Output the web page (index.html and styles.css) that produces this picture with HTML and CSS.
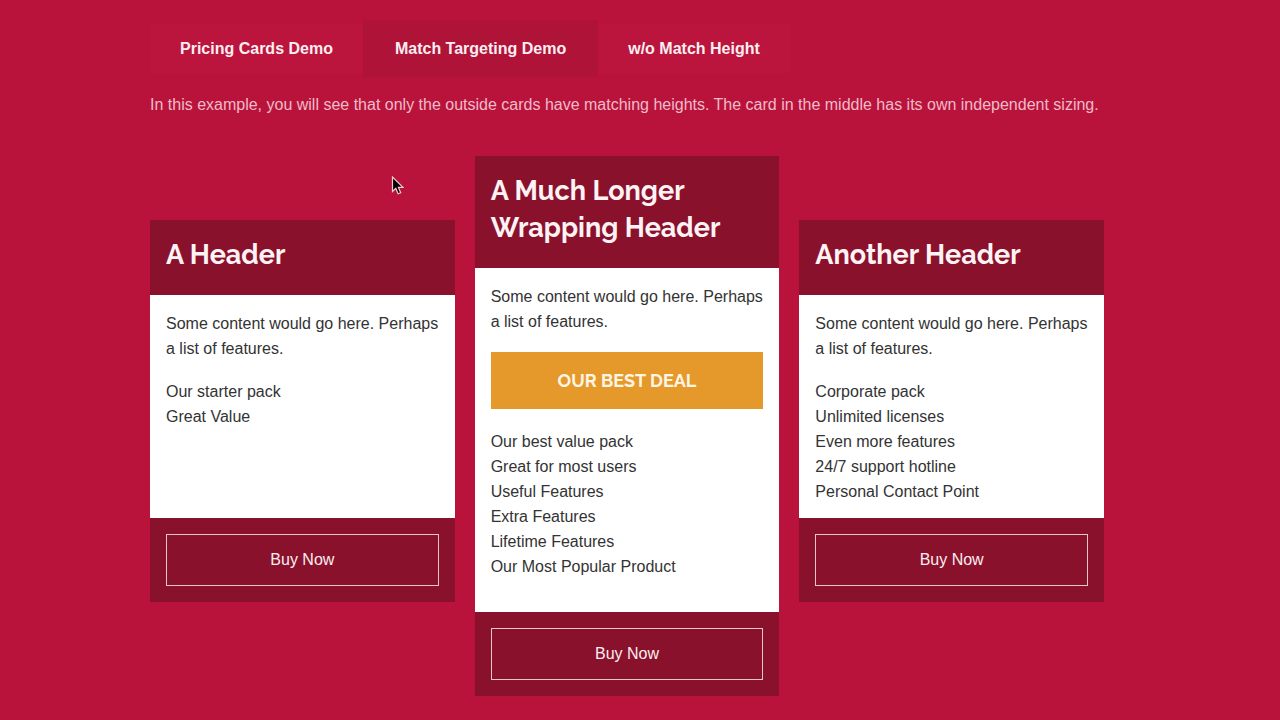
FILE: index.html
```html
<!DOCTYPE html>
<html lang="en">
<head>
<meta charset="UTF-8">
<meta name="viewport" content="width=device-width, initial-scale=1.0">
<title>Match Targeting Demo</title>
<link rel="stylesheet" href="styles.css">
</head>
<body>
<nav class="tabs">
  <a href="#pricing">Pricing Cards Demo</a>
  <a href="#targeting" class="active">Match Targeting Demo</a>
  <a href="#without">w/o Match Height</a>
</nav>
<p class="intro">In this example, you will see that only the outside cards have matching heights. The card in the middle has its own independent sizing.</p>
<main class="cards">
  <section class="card match">
    <h2>A Header</h2>
    <div class="card-body">
      <p>Some content would go here. Perhaps a list of features.</p>
      <ul>
        <li>Our starter pack</li>
        <li>Great Value</li>
      </ul>
    </div>
    <div class="card-footer">
      <button type="button">Buy Now</button>
    </div>
  </section>
  <section class="card">
    <h2>A Much Longer Wrapping Header</h2>
    <div class="card-body">
      <p>Some content would go here. Perhaps a list of features.</p>
      <h3>Our Best Deal</h3>
      <ul>
        <li>Our best value pack</li>
        <li>Great for most users</li>
        <li>Useful Features</li>
        <li>Extra Features</li>
        <li>Lifetime Features</li>
        <li>Our Most Popular Product</li>
      </ul>
    </div>
    <div class="card-footer">
      <button type="button">Buy Now</button>
    </div>
  </section>
  <section class="card match">
    <h2>Another Header</h2>
    <div class="card-body">
      <p>Some content would go here. Perhaps a list of features.</p>
      <ul>
        <li>Corporate pack</li>
        <li>Unlimited licenses</li>
        <li>Even more features</li>
        <li>24/7 support hotline</li>
        <li>Personal Contact Point</li>
      </ul>
    </div>
    <div class="card-footer">
      <button type="button">Buy Now</button>
    </div>
  </section>
</main>
<svg class="pointer" width="13" height="20" viewBox="0 0 13 20" aria-hidden="true">
  <path d="M1.5 1v14.5l3.3-3.1 2.3 5.4 2.6-1.1-2.3-5.3h4.6z" fill="#000" stroke="#f3c6d0" stroke-width="1.2"/>
</svg>
</body>
</html>
```
FILE: styles.css
```css
* {
  box-sizing: border-box;
}
body {
  margin: 0;
  padding: 20px 176px 24px 150px;
  background: #b9133c;
  color: #333;
  font: 16px/25px "Helvetica Neue", "Liberation Sans", Arial, sans-serif;
}
h2, h3, p, ul {
  margin: 0;
}
.tabs {
  display: flex;
  align-items: center;
}
.tabs a {
  padding: 12px 30px;
  background: #bb143d;
  color: #fceef1;
  font-weight: bold;
  text-decoration: none;
}
.tabs a.active {
  padding: 16px 32px;
  background: #af1338;
}
.intro {
  margin-top: 15px;
  color: #f0bcc8;
}
.cards {
  display: grid;
  grid-template-columns: repeat(3, 1fr);
  gap: 20px;
  align-items: center;
  margin-top: 39px;
}
.card {
  background: #8a112b;
}
.card h2 {
  padding: 16px 16px 22px;
  color: #fdf3f5;
  font: bold 27px/37px Raleway, Lato, sans-serif;
}
.card-body {
  padding: 16px 16px 13px;
  background: #fff;
}
.card-body p {
  margin-bottom: 18px;
}
.card-body h3 {
  margin-bottom: 20px;
  padding: 16px;
  background: #e6992b;
  color: #fff5e4;
  font: bold 18px/25px Raleway, Lato, sans-serif;
  text-align: center;
  text-transform: uppercase;
}
.card-body ul {
  min-height: 170px;
  padding: 0;
  list-style: none;
}
.card-footer {
  padding: 16px;
}
.card-footer button {
  display: block;
  width: 100%;
  padding: 13px;
  border: 1px solid #e8c4cc;
  background: none;
  color: #fbeef1;
  font: inherit;
  line-height: 24px;
}
/* outside cards share one body height */
.match {
  margin-bottom: 30px;
}
.match .card-body ul {
  min-height: 126px;
}
.pointer {
  position: absolute;
  top: 176px;
  left: 391px;
}
```
